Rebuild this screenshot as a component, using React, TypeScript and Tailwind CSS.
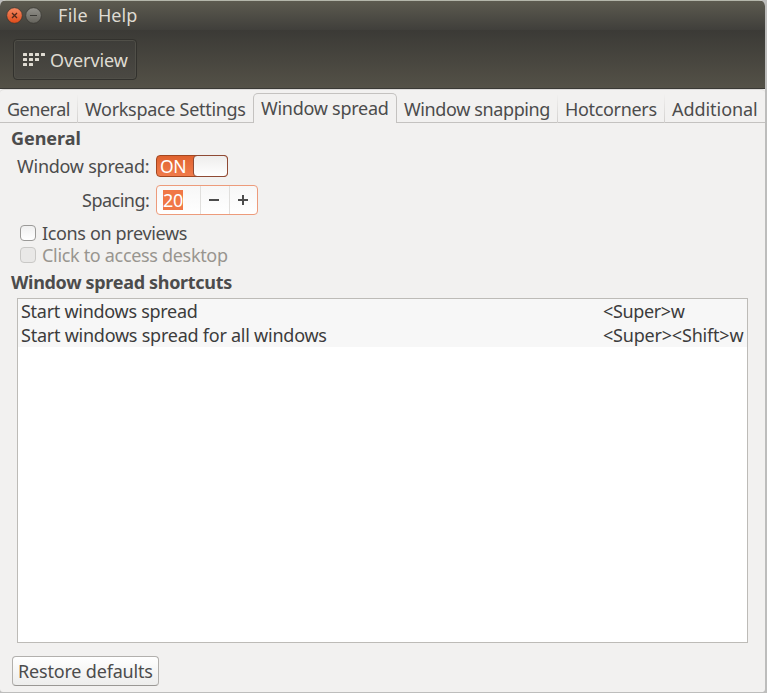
import type { ReactNode } from "react";

const rows = [
  { name: "Start windows spread", keys: "<Super>w", nt: "tracking-[-0.28px]", kt: "tracking-[-0.35px]" },
  { name: "Start windows spread for all windows", keys: "<Super><Shift>w", nt: "tracking-[-0.24px]", kt: "tracking-[-0.2px]" },
];

function Tab({ children, className }: { children: ReactNode; className: string }) {
  return (
    <div className={`flex h-[33px] shrink-0 items-center pt-[4px] leading-6 whitespace-nowrap ${className}`}>
      {children}
    </div>
  );
}

function Divider() {
  return <div className="mt-[4px] h-[29px] w-px shrink-0 bg-linear-to-b from-[#f2f1f0] to-[#d2d0ce]" />;
}

function Check({ label, disabled, className }: { label: string; disabled?: boolean; className: string }) {
  return (
    <label className={`flex h-[22px] items-center whitespace-nowrap ${disabled ? "text-[#98958f]" : ""}`}>
      <span
        className={`mr-[6px] h-4 w-4 rounded-[4px] border ${
          disabled ? "border-[#c9c8c6] bg-[#e9e8e7]" : "border-[#9b9a98] bg-linear-to-b from-[#f0f0f0] to-white"
        }`}
      />
      <span className={className}>{label}</span>
    </label>
  );
}

export default function App() {
  return (
    <div className="h-[693px] w-[767px] overflow-hidden bg-[#bdbdbc] pr-[2px] pb-px font-['Noto_Sans',sans-serif] text-[18px] leading-6 text-[#4c4c4c]">
      <div className="flex h-full flex-col overflow-hidden rounded-t-[6px] rounded-b-[3px] bg-[#f2f1f0]">
        <div className="flex h-[30px] shrink-0 items-center border-t border-[#b4b6aa] bg-linear-to-b from-[#5d5b50] to-[#403f3b] pl-[6px] text-[#dfdbd2]">
          <svg width="38" height="18" viewBox="0 0 38 18">
            <defs>
              <linearGradient id="close" x2="0" y2="1"><stop stopColor="#f58a63" /><stop offset="1" stopColor="#df4b19" /></linearGradient>
              <linearGradient id="min" x2="0" y2="1"><stop stopColor="#92918b" /><stop offset="1" stopColor="#65635c" /></linearGradient>
            </defs>
            <circle cx="8.5" cy="8.5" r="7.8" fill="url(#close)" stroke="#35342f" strokeWidth=".7" />
            <path d="M6 6l5 5m0-5l-5 5" stroke="#50291b" strokeWidth="1.3" />
            <circle cx="27.5" cy="8.5" r="7.8" fill="url(#min)" stroke="#35342f" strokeWidth=".7" />
            <path d="M24 8.5h7" stroke="#3a3935" strokeWidth="1.2" />
          </svg>
          <span className="-mt-px ml-[14px] w-10 tracking-[0.3px]">File</span>
          <span className="-mt-px">Help</span>
        </div>
        <div className="h-[59px] shrink-0 border-b border-[#3a3935] bg-linear-to-b from-[#3b3a36] to-[#545147] pt-[9px] pl-[13px]">
          <button className="flex h-[41px] w-[124px] items-center rounded-[4px] border border-[#32312d] bg-linear-to-b from-[#3e3d39] to-[#4b4943] pl-[9px] whitespace-nowrap text-[#dfdbd2] shadow-[inset_0_0_0_1px_#504f48]">
            <svg width="23" height="14" viewBox="0 0 23 14" fill="#dfdbd2" className="mt-px">
              {[0, 6, 12, 18].map((x) => <rect key={x} x={x} y="0" width="4" height="3" rx=".5" />)}
              {[0, 6, 12].map((x) => <rect key={x} x={x} y="5" width="4" height="3" rx=".5" />)}
              {[0, 6].map((x) => <rect key={x} x={x} y="10" width="4" height="3" rx=".5" />)}
            </svg>
            <span className="ml-[4px] tracking-[-0.08px]">Overview</span>
          </button>
        </div>
        <div className="flex h-[34px] shrink-0 rounded-t-[4px] border-t border-b border-t-[#dcdad8] border-b-[#c4c2c0]">
          <Tab className="w-[77px] pl-[7px] tracking-[-0.48px]">General</Tab>
          <Divider />
          <Tab className="w-[175px] pl-[7px] tracking-[-0.3px]">Workspace Settings</Tab>
          <div className="mt-[3px] flex h-[30px] w-[144px] shrink-0 items-center rounded-t-[5px] border border-b-0 border-[#c4c2c0] bg-[#f2f1f0] pb-[2px] pl-[7px] whitespace-nowrap">
            <span className="tracking-[-0.27px]">Window spread</span>
          </div>
          <Tab className="w-[160px] pl-[7px] tracking-[-0.38px]">Window snapping</Tab>
          <Divider />
          <Tab className="w-[106px] pl-[7px] tracking-[-0.33px]">Hotcorners</Tab>
          <Divider />
          <Tab className="w-[100px] pl-[7px] tracking-[-0.05px]">Additional</Tab>
        </div>
        <div className="flex min-h-0 grow flex-col pt-[3px] pl-[11px]">
          <h2 className="h-6 font-bold tracking-[-0.05px]">General</h2>
          <div className="mt-[4px] flex h-[24px] items-center">
            <span className="ml-[6px] w-[139px] whitespace-nowrap tracking-[-0.25px]">Window spread:</span>
            <div className="flex h-[22px] w-[72px] rounded-[4px] border border-[#a3461f] bg-linear-to-b from-[#e0622f] to-[#f07b4b]">
              <span className="w-[36px] pl-[3px] text-[17.5px] leading-[21px] tracking-[-0.3px] text-white">ON</span>
              <span className="-my-px -mr-px w-[35px] rounded-[4px] border border-[#8f4a34] bg-linear-to-b from-[#eeedec] to-white" />
            </div>
          </div>
          <div className="mt-[6px] flex h-[32px] items-center">
            <span className="ml-[71px] w-[74px] tracking-[-0.5px]">Spacing:</span>
            <div className="flex h-[30px] w-[102px] items-center rounded-[4px] border border-[#ed9b7b] bg-linear-to-b from-[#f7f7f7] to-white">
              <span className="ml-[6px] h-5 w-5 bg-[#f07746] leading-5 tracking-[-0.3px] text-white">20</span>
              <span className="ml-[17px] flex h-7 w-[30px] items-center border-x border-[#e0dfdd] pl-[8px]">
                <span className="h-[2px] w-[10px] bg-[#4c4c4c]" />
              </span>
              <svg className="ml-[8px]" width="10" height="10"><path d="M0 5h10M5 0v10" stroke="#4c4c4c" strokeWidth="2" /></svg>
            </div>
          </div>
          <div className="mt-[6px] ml-[9px]">
            <Check label="Icons on previews" className="tracking-[-0.35px]" />
            <Check label="Click to access desktop" disabled className="tracking-[-0.32px]" />
          </div>
          <h2 className="mt-[4px] h-6 font-bold tracking-[-0.32px]">Window spread shortcuts</h2>
          <div className="mt-[4px] ml-[6px] h-[345px] w-[731px] shrink-0 border border-[#bdbbb7] bg-white text-[#3c3c3c]">
            {rows.map((row) => (
              <div key={row.name} className="flex h-6 bg-[#f7f7f7] pl-[3px] whitespace-nowrap">
                <span className={`w-[582px] ${row.nt}`}>{row.name}</span>
                <span className={row.kt}>{row.keys}</span>
              </div>
            ))}
          </div>
          <button className="mt-[13px] ml-px h-[30px] w-[147px] shrink-0 rounded-[4px] border border-[#b2b0ad] border-b-[#999794] bg-linear-to-b from-white to-[#ededec] pl-[5px] text-left leading-[27px] whitespace-nowrap">
            <span className="tracking-[-0.18px]">Restore defaults</span>
          </button>
        </div>
      </div>
    </div>
  );
}
